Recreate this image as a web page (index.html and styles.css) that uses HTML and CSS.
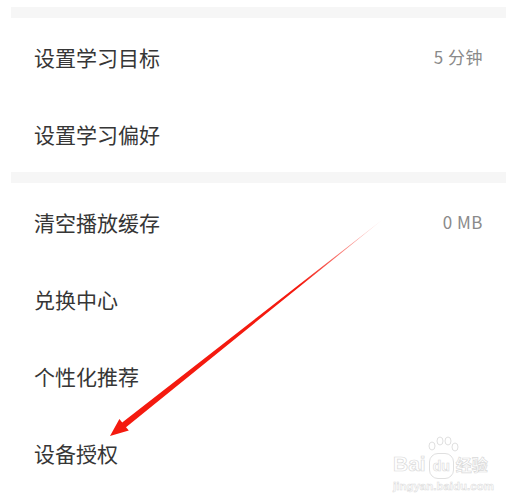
FILE: index.html
```html
<!DOCTYPE html>
<html lang="zh">
<head>
<meta charset="utf-8">
<link rel="stylesheet" href="styles.css">
</head>
<body>
<div class="page">
  <div class="gap"></div>
  <div class="row"><span class="label">设置学习目标</span><span class="value">5 分钟</span></div>
  <div class="row"><span class="label">设置学习偏好</span></div>
  <div class="gap"></div>
  <div class="row"><span class="label">清空播放缓存</span><span class="value">0 MB</span></div>
  <div class="row"><span class="label">兑换中心</span></div>
  <div class="row"><span class="label">个性化推荐</span></div>
  <div class="row"><span class="label">设备授权</span></div>
</div>
<svg class="arrow" width="514" height="504" viewBox="0 0 514 504">
  <defs>
    <linearGradient id="fade" gradientUnits="userSpaceOnUse" x1="382" y1="220" x2="300" y2="285">
      <stop offset="0" stop-color="#f41a0f" stop-opacity="0.15"/>
      <stop offset="1" stop-color="#f41a0f" stop-opacity="1"/>
    </linearGradient>
  </defs>
  <polygon points="382,220 126.0,427.2 128.8,430.6 110,436 119.4,418.9 122.2,422.5" fill="url(#fade)"/>
  <g class="paw" fill="none" stroke="#e0e0e0" stroke-width="1">
    <ellipse cx="432" cy="446" rx="3" ry="4"/>
    <ellipse cx="440" cy="441" rx="3" ry="4"/>
    <ellipse cx="448" cy="441" rx="3" ry="4"/>
    <ellipse cx="455" cy="447" rx="3" ry="4"/>
  </g>
</svg>
<div class="watermark">
  <div class="wm-logo"><span>Bai</span><span class="wm-du">du</span><span class="wm-cn">经验</span></div>
  <div class="wm-url">jingyan.baidu.com</div>
</div>
</body>
</html>
```
FILE: styles.css
```css
html, body {
  margin: 0;
  padding: 0;
  background: #ffffff;
}
body {
  width: 514px;
  height: 504px;
  overflow: hidden;
  position: relative;
  font-family: "Noto Sans CJK SC", "Noto Sans", sans-serif;
}
.page {
  padding: 7px 8px 0 11px;
}
.gap {
  height: 11px;
  background: #f6f6f6;
}
.row {
  height: 77px;
  display: flex;
  align-items: center;
  justify-content: space-between;
  padding: 0 23px;
  box-sizing: border-box;
}
.label {
  font-size: 21px;
  font-weight: 400;
  color: #363636;
}
.value {
  font-size: 17px;
  color: #8a8a8a;
  letter-spacing: 0.5px;
}
.arrow {
  position: absolute;
  left: 0;
  top: 0;
}
.watermark {
  position: absolute;
  left: 393px;
  top: 452px;
  color: #ffffff;
  font-family: "Liberation Sans", Arial, sans-serif;
  font-weight: bold;
  -webkit-text-stroke: 0.7px #dadada;
}
.wm-logo {
  font-size: 21px;
  line-height: 24px;
  display: flex;
  align-items: baseline;
}
.wm-du {
  font-size: 14px;
  margin-left: 3px;
  padding: 0 3px;
  border: 1px solid #e0e0e0;
  border-radius: 9px;
  -webkit-text-stroke: 0.6px #dadada;
}
.wm-cn {
  font-family: "Noto Sans CJK SC", sans-serif;
  font-size: 16px;
  margin-left: 2px;
}
.wm-url {
  font-size: 11.5px;
  line-height: 14px;
  -webkit-text-stroke: 0.5px #dadada;
}
```
